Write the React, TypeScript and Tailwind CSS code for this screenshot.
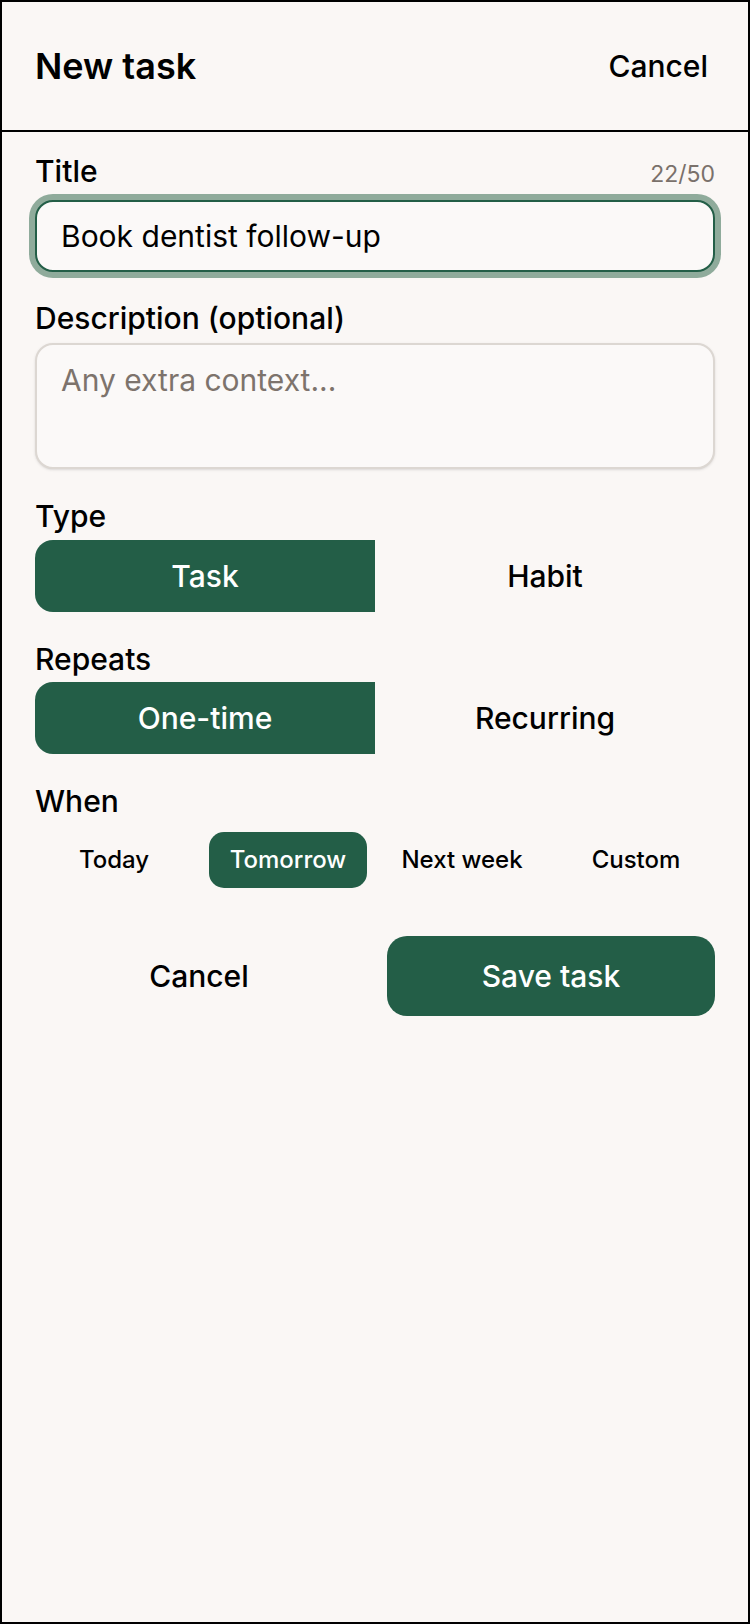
import React, { useState } from "react";

const GREEN = "bg-[#235e47]";

function Segmented({
  options,
  value,
  onChange,
}: {
  options: string[];
  value: string;
  onChange: (v: string) => void;
}) {
  return (
    <div className="grid grid-cols-2 h-[72px] rounded-[18px] overflow-hidden">
      {options.map((opt) => (
        <button
          key={opt}
          type="button"
          onClick={() => onChange(opt)}
          className={
            opt === value
              ? `${GREEN} text-white text-[30px] leading-[36px] font-medium`
              : "text-black text-[30px] leading-[36px] font-medium"
          }
        >
          {opt}
        </button>
      ))}
    </div>
  );
}

export default function App() {
  const [title, setTitle] = useState("Book dentist follow-up");
  const [desc, setDesc] = useState("");
  const [type, setType] = useState("Task");
  const [repeats, setRepeats] = useState("One-time");
  const [when, setWhen] = useState("Tomorrow");

  return (
    <div className="w-[750px] h-[1624px] border-2 border-black bg-[#faf7f5] text-black font-['Inter',sans-serif]">
      {/* Header */}
      <header className="h-[130px] border-b-2 border-black flex items-center justify-between pl-[33px] pr-[40px]">
        <h1 className="text-[36px] leading-[42px] font-semibold">New task</h1>
        <button type="button" className="text-[30px] leading-[36px] font-medium">
          Cancel
        </button>
      </header>

      <main className="px-[33px] pt-[21px] flex flex-col">
        {/* Title */}
        <div className="flex items-baseline justify-between">
          <label className="text-[30px] leading-[36px] font-medium">Title</label>
          <span className="text-[23px] leading-[28px] text-[#7a716b]">{title.length}/50</span>
        </div>
        <input
          value={title}
          maxLength={50}
          onChange={(e) => setTitle(e.target.value)}
          className="mt-[11px] h-[72px] w-full rounded-[18px] border-2 border-[#235e47] ring-[6px] ring-[#8fab9b] bg-[#fbf9f8] px-[24px] text-[30px] outline-none"
        />

        {/* Description */}
        <label className="mt-[28px] text-[30px] leading-[36px] font-medium">Description (optional)</label>
        <textarea
          value={desc}
          onChange={(e) => setDesc(e.target.value)}
          placeholder="Any extra context..."
          className="mt-[7px] h-[126px] w-full resize-none rounded-[18px] border-2 border-[#dcd7d2] bg-[#fbf9f8] shadow-sm px-[24px] pt-[17px] text-[30px] leading-[36px] outline-none placeholder:text-[#7d736c]"
        />

        {/* Type */}
        <label className="mt-[29px] mb-[6px] text-[30px] leading-[36px] font-medium">Type</label>
        <Segmented options={["Task", "Habit"]} value={type} onChange={setType} />

        {/* Repeats */}
        <label className="mt-[29px] mb-[5px] text-[30px] leading-[36px] font-medium">Repeats</label>
        <Segmented options={["One-time", "Recurring"]} value={repeats} onChange={setRepeats} />

        {/* When */}
        <label className="mt-[29px] text-[30px] leading-[36px] font-medium">When</label>
        <div className="mt-[13px] grid grid-cols-4 gap-4">
          {["Today", "Tomorrow", "Next week", "Custom"].map((w) => (
            <button
              key={w}
              type="button"
              onClick={() => setWhen(w)}
              className={
                w === when
                  ? `${GREEN} h-[56px] rounded-[15px] text-white text-[24px] font-medium`
                  : "h-[56px] rounded-[15px] text-black text-[24px] font-medium"
              }
            >
              {w}
            </button>
          ))}
        </div>

        {/* Actions */}
        <div className="mt-[48px] grid grid-cols-2 gap-6">
          <button type="button" className="h-[80px] text-[30px] font-medium">
            Cancel
          </button>
          <button type="button" className={`${GREEN} h-[80px] rounded-[20px] text-white text-[30px] font-medium`}>
            Save task
          </button>
        </div>
      </main>
    </div>
  );
}
